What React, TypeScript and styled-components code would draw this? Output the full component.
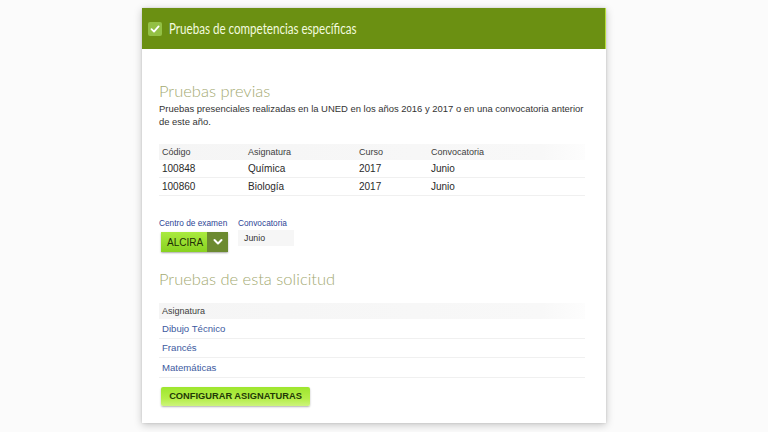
import React from "react";
import styled, { createGlobalStyle } from "styled-components";

const Global = createGlobalStyle`
  html, body { margin: 0; padding: 0; }
  body {
    background: #fbfbfb;
    font-family: "Liberation Sans", Arial, sans-serif;
    width: 768px;
    height: 432px;
    overflow: hidden;
  }
`;

const Page = styled.div`
  padding: 8px 0 0 142px;
`;

const Card = styled.section`
  width: 464px;
  height: 415px;
  background: #ffffff;
  box-shadow: 0 2px 8px rgba(0, 0, 0, 0.22), 0 0 2px rgba(0, 0, 0, 0.12);
  display: flex;
  flex-direction: column;
`;

const Header = styled.header`
  height: 41px;
  background: #6b9012;
  display: flex;
  align-items: center;
  gap: 7px;
  padding: 0 0 0 6px;
  border-right: 1px solid #b7df3c;
`;

const Check = styled.span`
  width: 14px;
  height: 14px;
  background: #93c044;
  border-radius: 2px;
  display: flex;
  align-items: center;
  justify-content: center;
`;

const Title = styled.h1`
  margin: 0;
  font-family: Lato, "Open Sans", sans-serif;
  font-weight: 400;
  font-size: 14.5px;
  color: #f2fadf;
  white-space: nowrap;
  transform: scaleX(0.8);
  transform-origin: left center;
`;

const Body = styled.div`
  padding: 31px 21px 0 17px;
  display: flex;
  flex-direction: column;
`;

const SectionTitle = styled.h2<{ $mt?: number }>`
  margin: ${(p) => p.$mt ?? 0}px 0 0 0;
  font-family: Lato, sans-serif;
  font-weight: 300;
  font-size: 16.5px;
  line-height: 22px;
  color: #a4aa72;
`;

const Para = styled.p`
  margin: 0;
  font-size: 9.45px;
  line-height: 13px;
  color: #333;
  white-space: nowrap;
`;

const Table = styled.div<{ $mt: number }>`
  margin-top: ${(p) => p.$mt}px;
  display: flex;
  flex-direction: column;
`;

const HeadRow = styled.div<{ $cols: string }>`
  display: grid;
  grid-template-columns: ${(p) => p.$cols};
  height: 16px;
  align-items: center;
  padding-left: 3px;
  font-size: 9px;
  color: #3d3d3d;
  background: linear-gradient(90deg, #f5f5f5 0%, #f8f8f8 90%, #fdfdfd 100%);
`;

const Row = styled.div<{ $cols: string; $link?: boolean; $h: number }>`
  box-sizing: border-box;
  display: grid;
  grid-template-columns: ${(p) => p.$cols};
  height: ${(p) => p.$h}px;
  align-items: center;
  padding-left: 3px;
  border-bottom: 1px solid #f0f0f0;
  font-size: ${(p) => (p.$link ? "9.6px" : "10px")};
  color: ${(p) => (p.$link ? "#3d5aa0" : "#2a2a2a")};
`;

const Fields = styled.div`
  margin-top: 21px;
  display: flex;
  gap: 10px;
`;

const Field = styled.div`
  display: flex;
  flex-direction: column;
`;

const Label = styled.label`
  font-size: 8.3px;
  color: #2e4596;
  line-height: 12px;
`;

const Select = styled.div`
  margin: 3px 0 0 2px;
  width: 67px;
  height: 20px;
  display: flex;
  box-shadow: 0 1px 2px rgba(0, 0, 0, 0.35);
  border-radius: 1px;
`;

const SelectText = styled.span`
  flex: 1;
  display: flex;
  align-items: center;
  padding-left: 6px;
  font-size: 10px;
  color: #1e2e06;
  background: linear-gradient(180deg, #aaea40 0%, #88d220 100%);
`;

const SelectBtn = styled.span`
  width: 21px;
  display: flex;
  align-items: center;
  justify-content: center;
  background: #6c8a30;
`;

const ValueBox = styled.div`
  margin-top: 1px;
  width: 50px;
  height: 16px;
  padding-left: 6px;
  display: flex;
  align-items: center;
  font-size: 8.8px;
  color: #333;
  background: #f6f6f6;
`;

const Button = styled.button`
  margin: 9px 0 0 2px;
  align-self: flex-start;
  width: 149px;
  height: 19px;
  border: none;
  border-radius: 2px;
  font-family: "Liberation Sans", Arial, sans-serif;
  font-weight: 700;
  font-size: 9.3px;
  color: #233a06;
  background: linear-gradient(180deg, #9ee62e 0%, #b4ee48 60%, #cdf47c 100%);
  box-shadow: 0 1px 2px rgba(0, 0, 0, 0.3);
  padding: 0;
`;

const prevCols = "86px 111px 72px 1fr";

export default function App() {
  return (
    <>
      <Global />
      <Page>
        <Card>
          <Header>
            <Check>
              <svg width="10" height="10" viewBox="0 0 10 10">
                <path d="M1.5 5.2 L4 7.6 L8.6 2.4" fill="none" stroke="#fff" strokeWidth="1.8" strokeLinecap="round" strokeLinejoin="round" />
              </svg>
            </Check>
            <Title>Pruebas de competencias específicas</Title>
          </Header>
          <Body>
            <SectionTitle>Pruebas previas</SectionTitle>
            <Para>Pruebas presenciales realizadas en la UNED en los años 2016 y 2017 o en una convocatoria anterior</Para>
            <Para>de este año.</Para>
            <Table $mt={16}>
              <HeadRow $cols={prevCols}>
                <span>Código</span>
                <span>Asignatura</span>
                <span>Curso</span>
                <span>Convocatoria</span>
              </HeadRow>
              <Row $cols={prevCols} $h={18}>
                <span>100848</span>
                <span>Química</span>
                <span>2017</span>
                <span>Junio</span>
              </Row>
              <Row $cols={prevCols} $h={18}>
                <span>100860</span>
                <span>Biología</span>
                <span>2017</span>
                <span>Junio</span>
              </Row>
            </Table>
            <Fields>
              <Field>
                <Label>Centro de examen</Label>
                <Select>
                  <SelectText>ALCIRA</SelectText>
                  <SelectBtn>
                    <svg width="10" height="8" viewBox="0 0 10 8">
                      <path d="M1.5 2 L5 5.5 L8.5 2" fill="none" stroke="#fff" strokeWidth="2" strokeLinecap="round" strokeLinejoin="round" />
                    </svg>
                  </SelectBtn>
                </Select>
              </Field>
              <Field>
                <Label>Convocatoria</Label>
                <ValueBox>Junio</ValueBox>
              </Field>
            </Fields>
            <SectionTitle $mt={16}>Pruebas de esta solicitud</SectionTitle>
            <Table $mt={13}>
              <HeadRow $cols="1fr">
                <span>Asignatura</span>
              </HeadRow>
              <Row $cols="1fr" $link $h={19.5}>
                <span>Dibujo Técnico</span>
              </Row>
              <Row $cols="1fr" $link $h={19.5}>
                <span>Francés</span>
              </Row>
              <Row $cols="1fr" $link $h={19.5}>
                <span>Matemáticas</span>
              </Row>
            </Table>
            <Button>CONFIGURAR ASIGNATURAS</Button>
          </Body>
        </Card>
      </Page>
    </>
  );
}
